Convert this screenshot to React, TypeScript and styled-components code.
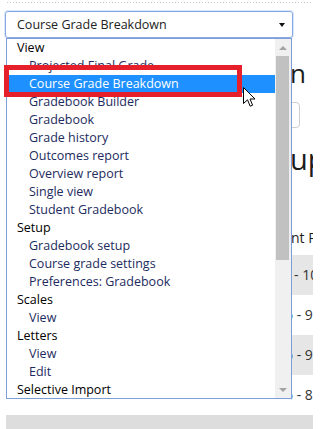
import React from "react";
import styled, { createGlobalStyle } from "styled-components";

const Global = createGlobalStyle`
  html, body { margin: 0; padding: 0; background: #fff; overflow: hidden; }
  body { width: 313px; height: 429px; font-family: "Open Sans", "Noto Sans", Arial, sans-serif; }
`;

const Page = styled.div`
  position: relative;
  width: 313px;
  height: 429px;
  padding-top: 2px;
  box-sizing: border-box;
  overflow: hidden;
`;

const TopRule = styled.div`
  height: 1px;
  margin-left: 7px;
  background-image: linear-gradient(to right, #c9c9c9 1px, transparent 1px);
  background-size: 3px 1px;
`;

const SelectWrap = styled.div`
  position: relative;
  margin: 8px 0 0 5px;
  width: 288px;
  z-index: 2;
`;

const SelectBox = styled.div`
  height: 27px;
  box-sizing: border-box;
  border: 1px solid #86a8e3;
  border-radius: 3px;
  box-shadow: 0 0 0 1px rgba(134, 168, 227, 0.3);
  display: flex;
  align-items: center;
  justify-content: space-between;
  padding: 0 6px 0 11px;
  font-size: 12.5px;
  color: #222;
`;

const Caret = styled.span`
  width: 0;
  height: 0;
  border-left: 3px solid transparent;
  border-right: 3px solid transparent;
  border-top: 4px solid #111;
  margin-right: 1px;
`;

const Dropdown = styled.div`
  position: absolute;
  top: 27px;
  left: 1px;
  width: 286px;
  height: 361px;
  box-sizing: border-box;
  border: 1px solid #7d9ed8;
  background: #fff;
  display: flex;
  overflow: hidden;
`;

const Options = styled.div`
  width: 268px;
  display: flex;
  flex-direction: column;
`;

const Row = styled.div<{ $indent?: boolean; $selected?: boolean }>`
  flex: none;
  height: 18px;
  line-height: 18px;
  font-size: 12.5px;
  white-space: nowrap;
  padding-left: ${(p) => (p.$indent ? "22px" : "10px")};
  color: ${(p) => (p.$selected ? "#fff" : p.$indent ? "#1d2b5e" : "#000")};
  background: ${(p) => (p.$selected ? "#1e90ff" : "transparent")};
`;

const Scrollbar = styled.div`
  width: 16px;
  background: #f0f0f0;
  display: flex;
  flex-direction: column;
`;

const ArrowButton = styled.div`
  flex: none;
  height: 17px;
  display: flex;
  align-items: center;
  justify-content: center;
  padding-right: 1px;
`;

const Arrow = styled.span<{ $down?: boolean }>`
  width: 0;
  height: 0;
  border-left: 4px solid transparent;
  border-right: 4px solid transparent;
  ${(p) => (p.$down ? "border-top: 4px solid #a3a3a3;" : "border-bottom: 4px solid #a3a3a3;")}
`;

const Thumb = styled.div`
  flex: none;
  height: 204px;
  margin: 0 2px 0 1px;
  background: #c1c1c1;
`;

const Spacer = styled.div`
  flex: 1;
`;

const Content = styled.div`
  margin: 19px 0 0 291px;
  overflow: hidden;
  color: #1c1c1c;
`;

const Heading = styled.div<{ $size: number; $lh: number; $mt: number }>`
  font-size: ${(p) => p.$size}px;
  line-height: ${(p) => p.$lh}px;
  height: ${(p) => p.$lh}px;
  margin-top: ${(p) => p.$mt}px;
  margin-left: -1px;
  white-space: nowrap;
`;

const BgSelect = styled.div`
  position: relative;
  margin: 13px 0 0 -31px;
  width: 40px;
  height: 26px;
  box-sizing: border-box;
  border: 1px solid #cfcfcf;
  border-radius: 4px;
`;

const BgCaret = styled.svg`
  position: absolute;
  right: 6px;
  top: 6px;
`;

const TableHead = styled.div`
  margin-top: 51px;
  height: 27px;
  line-height: 20px;
  font-size: 14px;
  white-space: nowrap;
`;

const TableRow = styled.div<{ $shaded: boolean; $offset: number }>`
  height: 40px;
  line-height: 40px;
  font-size: 14px;
  white-space: nowrap;
  color: #333;
  background: ${(p) => (p.$shaded ? "#e6e6e6" : "#fff")};
  text-indent: ${(p) => p.$offset}px;
`;

const FooterBar = styled.div`
  margin-left: 6px;
  height: 20px;
  background: #dddddd;
`;

const Callout = styled.div`
  position: absolute;
  left: 4px;
  top: 65px;
  width: 238px;
  height: 32px;
  box-sizing: border-box;
  border: 5px solid #e5202a;
  z-index: 3;
  pointer-events: none;
`;

const Cursor = styled.svg`
  position: absolute;
  left: 243px;
  top: 87px;
  z-index: 4;
`;

type Group = { label: string; items: string[] };

const groups: Group[] = [
  {
    label: "View",
    items: [
      "Projected Final Grade",
      "Course Grade Breakdown",
      "Gradebook Builder",
      "Gradebook",
      "Grade history",
      "Outcomes report",
      "Overview report",
      "Single view",
      "Student Gradebook",
    ],
  },
  { label: "Setup", items: ["Gradebook setup", "Course grade settings", "Preferences: Gradebook"] },
  { label: "Scales", items: ["View"] },
  { label: "Letters", items: ["View", "Edit"] },
  { label: "Selective Import", items: [] },
];

const selected = "Course Grade Breakdown";

const tableRows = [
  { text: "- 10", offset: 3, shaded: true },
  { text: "6 - 9", offset: -6, shaded: false },
  { text: "6 - 9", offset: -6, shaded: true },
  { text: "6 - 8", offset: -6, shaded: false },
];

export default function App() {
  return (
    <>
      <Global />
      <Page>
        <TopRule />
        <SelectWrap>
          <SelectBox>
            <span>{selected}</span>
            <Caret />
          </SelectBox>
          <Dropdown>
            <Options>
              {groups.map((g) => (
                <React.Fragment key={g.label}>
                  <Row>{g.label}</Row>
                  {g.items.map((it) => (
                    <Row key={g.label + it} $indent $selected={g.label === "View" && it === selected}>
                      {it}
                    </Row>
                  ))}
                </React.Fragment>
              ))}
            </Options>
            <Scrollbar>
              <ArrowButton>
                <Arrow />
              </ArrowButton>
              <Thumb />
              <Spacer />
              <ArrowButton>
                <Arrow $down />
              </ArrowButton>
            </Scrollbar>
          </Dropdown>
        </SelectWrap>
        <Content>
          <Heading $size={26} $lh={32} $mt={0}>n</Heading>
          <BgSelect>
            <BgCaret width="8" height="8" viewBox="0 0 8 8">
              <path d="M1 1 L7 1 L4 6 Z" fill="#333" />
            </BgCaret>
          </BgSelect>
          <Heading $size={29} $lh={36} $mt={13}>up</Heading>
          <TableHead>nt Range</TableHead>
          {tableRows.map((r, i) => (
            <TableRow key={i} $shaded={r.shaded} $offset={r.offset}>
              {r.text}
            </TableRow>
          ))}
        </Content>
        <FooterBar />
        <Callout />
        <Cursor width="13" height="21" viewBox="0 0 13 21">
          <path
            d="M0.5 0.5 L0.5 16.5 L4.5 12.8 L7.2 19.2 L9.6 18.2 L7 12 L12 12 Z"
            fill="#fff"
            stroke="#000"
            strokeWidth="1"
            strokeLinejoin="miter"
          />
        </Cursor>
      </Page>
    </>
  );
}
